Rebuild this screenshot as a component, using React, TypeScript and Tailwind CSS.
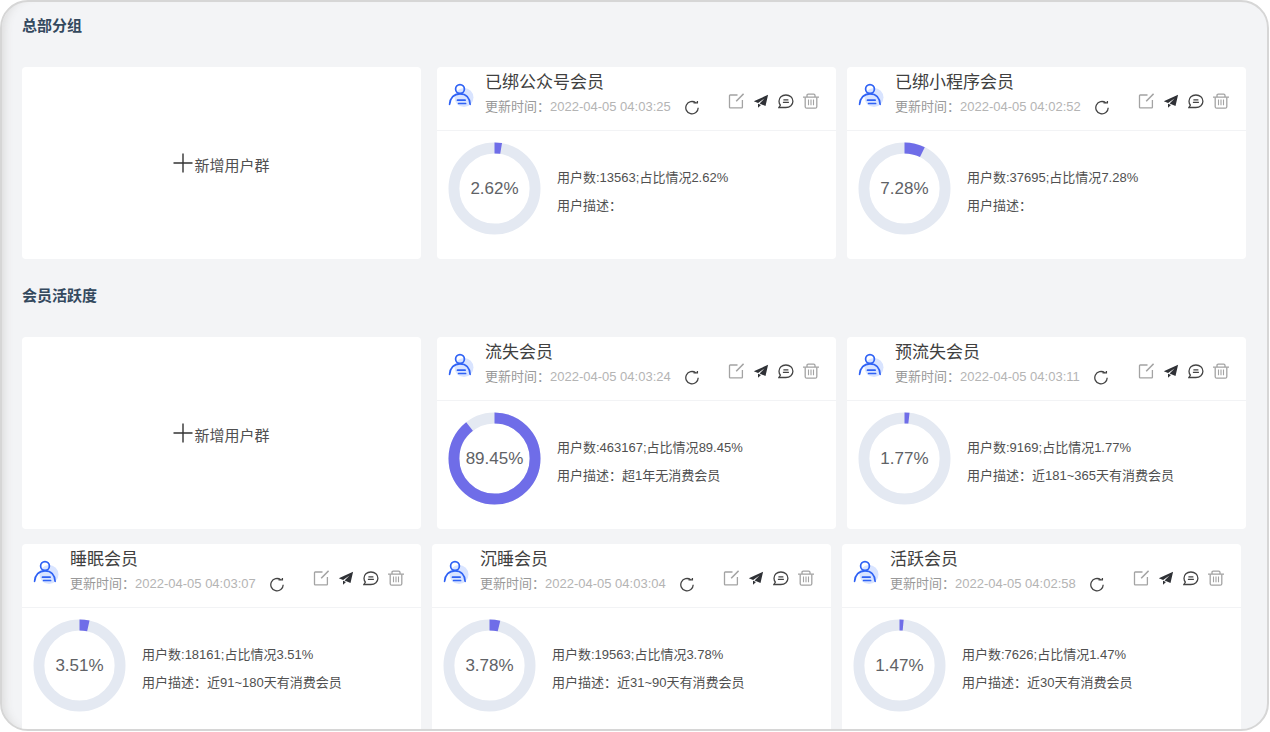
import React from "react";

type Group = {
  id: number;
  name: string;
  updatedAt: string;
  count: number;
  percent: number;
  desc: string;
};

const headquarters: Group[] = [
  { id: 1, name: "已绑公众号会员", updatedAt: "2022-04-05 04:03:25", count: 13563, percent: 2.62, desc: "" },
  { id: 2, name: "已绑小程序会员", updatedAt: "2022-04-05 04:02:52", count: 37695, percent: 7.28, desc: "" },
];

const activity: Group[] = [
  { id: 3, name: "流失会员", updatedAt: "2022-04-05 04:03:24", count: 463167, percent: 89.45, desc: "超1年无消费会员" },
  { id: 4, name: "预流失会员", updatedAt: "2022-04-05 04:03:11", count: 9169, percent: 1.77, desc: "近181~365天有消费会员" },
  { id: 5, name: "睡眠会员", updatedAt: "2022-04-05 04:03:07", count: 18161, percent: 3.51, desc: "近91~180天有消费会员" },
  { id: 6, name: "沉睡会员", updatedAt: "2022-04-05 04:03:04", count: 19563, percent: 3.78, desc: "近31~90天有消费会员" },
  { id: 7, name: "活跃会员", updatedAt: "2022-04-05 04:02:58", count: 7626, percent: 1.47, desc: "近30天有消费会员" },
];

function UserIcon() {
  return (
    <svg viewBox="0 0 26 26" className="size-[26px] shrink-0" fill="none" strokeLinecap="round">
      <circle cx="16" cy="14.5" r="9.5" fill="#d9e4ff" />
      <circle cx="12" cy="6" r="4.4" stroke="#2f62f5" strokeWidth="1.7" />
      <path d="M1.600 21.300C2 15 6 10.800 12 10.800S21.800 15 22.100 21.300" stroke="#2f62f5" strokeWidth="1.7" />
      <path d="M9.500 17.200h7.600M10.600 20.500h7" stroke="#2f62f5" strokeWidth="1.7" />
    </svg>
  );
}

function RefreshIcon() {
  return (
    <svg viewBox="0 0 16 16" className="size-4" fill="none" stroke="#444" strokeWidth="1.3">
      <path d="M14.200 8.800A6.200 6.200 0 1 1 11.800 3.800" />
      <path d="M9.500 3.900h3.900V2" />
    </svg>
  );
}

function EditIcon() {
  return (
    <svg viewBox="0 0 16 16" className="size-4" fill="none" stroke="#a3a3a3" strokeWidth="1.3">
      <path d="M9.500 2H2.200q-.7 0-.7.700v11.500q0 .7.700.7h11.500q.7 0 .7-.7V7" />
      <path d="M8.200 8.200 15.600.8" strokeWidth="1.5" />
    </svg>
  );
}

function SendIcon() {
  return (
    <svg viewBox="0 0 16 16" className="size-4" fill="#2f3136">
      <path d="M15.100 1.800.8 8.300l4.300 1.600 6.400-4.500-4.900 5.200 5.900 2.500z" />
      <path d="M5 10.700v4.100l3-2.800z" />
    </svg>
  );
}

function ChatIcon() {
  return (
    <svg viewBox="0 0 16 16" className="size-4" fill="none" stroke="#444" strokeWidth="1.3">
      <path d="M.9 14.500h6.900c4.200 0 7.100-2.800 7.100-6.300S12 2 7.900 2 1 4.700 1 8.200c0 1.600.5 2.800 1.400 3.900z" />
      <path d="M5.400 6.900h5M4.900 9.400h6" />
    </svg>
  );
}

function TrashIcon() {
  return (
    <svg viewBox="0 0 16 16" className="size-4" fill="none" stroke="#a3a3a3" strokeWidth="1.3">
      <path d="M0 4.200h16M4 4.200V2.500q0-1.300 1.300-1.300h5.400q1.300 0 1.300 1.300v1.700" />
      <path d="M2.200 4.200v9.500q0 1.500 1.500 1.500h8.600q1.500 0 1.500-1.500V4.200" />
      <path d="M5.500 6.400v5.800M8 6.400v5.800M10.500 6.400v5.800" strokeWidth="1.1" />
    </svg>
  );
}

function Ring({ percent }: { percent: number }) {
  return (
    <div className="relative size-[93px] shrink-0">
      <svg viewBox="0 0 94 94" className="size-full -rotate-90" fill="none" strokeWidth="11">
        <circle cx="47" cy="47" r="41" stroke="#e4e9f2" />
        <circle
          cx="47"
          cy="47"
          r="41"
          stroke="#6f6de8"
          pathLength={100}
          strokeDasharray={`${percent} 100`}
        />
      </svg>
      <span className="absolute inset-0 flex items-center justify-center text-[17px] text-[#606266]">
        {percent}%
      </span>
    </div>
  );
}

function AddCard() {
  return (
    <button
      type="button"
      className="mr-[5px] flex h-48 w-[calc((100%-28px)/3)] items-center justify-center gap-px rounded-[4px] bg-white text-[15px] text-[#505050]"
    >
      <svg viewBox="0 0 20 20" className="size-5" fill="none" stroke="#333" strokeWidth="1.4">
        <path d="M.5 10h19M10 .5v19" />
      </svg>
      <span className="pt-1.5">新增用户群</span>
    </button>
  );
}

function GroupCard({ group }: { group: Group }) {
  return (
    <article className="h-48 w-[calc((100%-28px)/3)] rounded-[4px] bg-white">
      <header className="flex h-16 border-b border-[#f2f3f5] pr-[17px] pl-[11px]">
        <div className="pt-4">
          <UserIcon />
        </div>
        <div className="ml-[11px] pt-1">
          <h3 className="text-[17px] leading-6 text-[#404040]">{group.name}</h3>
          <div className="flex h-6 items-center text-[13px] whitespace-nowrap text-[#b4b4b4]">
            <span className="text-[#999]">更新时间：</span>
            <time>{group.updatedAt}</time>
            <button type="button" aria-label="刷新" className="ml-[13px]">
              <RefreshIcon />
            </button>
          </div>
        </div>
        <div className="ml-auto flex items-center gap-[9px] pt-[5px]">
          <button type="button" aria-label="编辑">
            <EditIcon />
          </button>
          <button type="button" aria-label="发送">
            <SendIcon />
          </button>
          <button type="button" aria-label="短信">
            <ChatIcon />
          </button>
          <button type="button" aria-label="删除">
            <TrashIcon />
          </button>
        </div>
      </header>
      <div className="flex gap-4 px-[11px] pt-[11px]">
        <Ring percent={group.percent} />
        <div className="pt-[22px] text-[13px] leading-7 text-[#505050]">
          <p>
            用户数:{group.count};占比情况{group.percent}%
          </p>
          <p>用户描述：{group.desc}</p>
        </div>
      </div>
    </article>
  );
}

function Section({ title, groups }: { title: string; groups: Group[] }) {
  return (
    <section>
      <h2 className="mb-[31px] text-[15px] leading-5 font-bold text-[#34495e]">{title}</h2>
      <div className="flex flex-wrap gap-x-[11px] gap-y-[15px]">
        <AddCard />
        {groups.map((group) => (
          <GroupCard key={group.id} group={group} />
        ))}
      </div>
    </section>
  );
}

export default function App() {
  return (
    <div className="h-screen bg-white pr-px pb-px font-['Liberation_Sans','Noto_Sans_CJK_SC',sans-serif]">
      <main className="flex h-full flex-col gap-[27px] overflow-hidden rounded-[28px] border-2 border-[#d6d6d6] bg-[#f3f4f6] px-5 pt-[14px] shadow-[inset_10px_0_10px_-8px_#d9d9d9]">
        <Section title="总部分组" groups={headquarters} />
        <Section title="会员活跃度" groups={activity} />
      </main>
    </div>
  );
}
